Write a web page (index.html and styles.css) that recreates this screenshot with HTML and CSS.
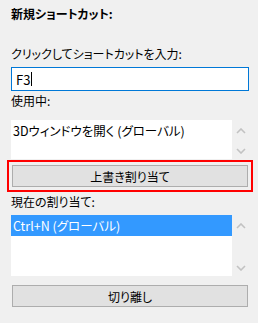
FILE: index.html
```html
<!DOCTYPE html>
<html lang="ja">
<head>
<meta charset="utf-8">
<link rel="stylesheet" href="styles.css">
</head>
<body>
<div class="panel">
  <div class="title">新規ショートカット:</div>
  <div class="label first">クリックしてショートカットを入力:</div>
  <div class="input"><span class="val">F3</span><span class="caret"></span></div>
  <div class="label">使用中:</div>
  <div class="listrow list1">
    <div class="list"><div class="item">3Dウィンドウを開く (グローバル)</div></div>
    <div class="scroll">
      <svg width="10" height="6" viewBox="0 0 10 6"><polyline points="1,5 5,1 9,5" fill="none" stroke="#c2c2c2" stroke-width="1.6"/></svg>
      <svg width="10" height="6" viewBox="0 0 10 6"><polyline points="1,1 5,5 9,1" fill="none" stroke="#c2c2c2" stroke-width="1.6"/></svg>
    </div>
  </div>
  <div class="focus"><div class="btn">上書き割り当て</div></div>
  <div class="label">現在の割り当て:</div>
  <div class="listrow list2">
    <div class="list"><div class="item sel">Ctrl+N (グローバル)</div></div>
    <div class="scroll">
      <svg width="10" height="6" viewBox="0 0 10 6"><polyline points="1,5 5,1 9,5" fill="none" stroke="#c2c2c2" stroke-width="1.6"/></svg>
      <svg width="10" height="6" viewBox="0 0 10 6"><polyline points="1,1 5,5 9,1" fill="none" stroke="#c2c2c2" stroke-width="1.6"/></svg>
    </div>
  </div>
  <div class="btn plain">切り離し</div>
</div>
</body>
</html>
```
FILE: styles.css
```css
html, body {
  margin: 0;
  padding: 0;
  background: #f0f0f0;
}
body {
  width: 258px;
  height: 323px;
  overflow: hidden;
  font-family: "Noto Sans CJK JP", sans-serif;
  font-size: 12px;
  font-feature-settings: "palt";
  color: #000;
}
.panel {
  display: flex;
  flex-direction: column;
  padding: 6px 9px 0 11px;
}
.title {
  font-weight: bold;
  line-height: 16px;
  height: 16px;
}
.label {
  line-height: 16px;
  height: 16px;
  margin-top: 2px;
}
.label.first {
  margin-top: 24px;
}
.input {
  margin-top: 5px;
  height: 24px;
  box-sizing: border-box;
  border: 1px solid #0078d7;
  background: #fff;
  display: flex;
  align-items: center;
  padding-left: 4px;
  font-size: 13px;
}
.caret {
  width: 1px;
  height: 14px;
  background: #000;
  margin-left: 1px;
}
.listrow {
  display: flex;
  margin-top: 11px;
}
.list {
  width: 221px;
  background: #fff;
}
.list1 .list { height: 39px; }
.list2 { margin-top: 5px; }
.list2 .list { height: 61px; }
.item {
  height: 21px;
  line-height: 21px;
  padding-left: 2px;
  font-size: 12.5px;
}
.item.sel {
  background: #3399ff;
  color: #fff;
}
.scroll {
  width: 17px;
  display: flex;
  flex-direction: column;
  justify-content: space-between;
  align-items: center;
  padding: 8px 0 5px;
}
.focus {
  margin: 1px -4px 0 -4px;
  border: 2px solid #ff0000;
  padding: 3px;
}
.btn {
  height: 22px;
  box-sizing: border-box;
  border: 1px solid #adadad;
  background: #e1e1e1;
  display: flex;
  align-items: center;
  justify-content: center;
}
.btn.plain {
  margin: 9px 1px 0 1px;
}
```
